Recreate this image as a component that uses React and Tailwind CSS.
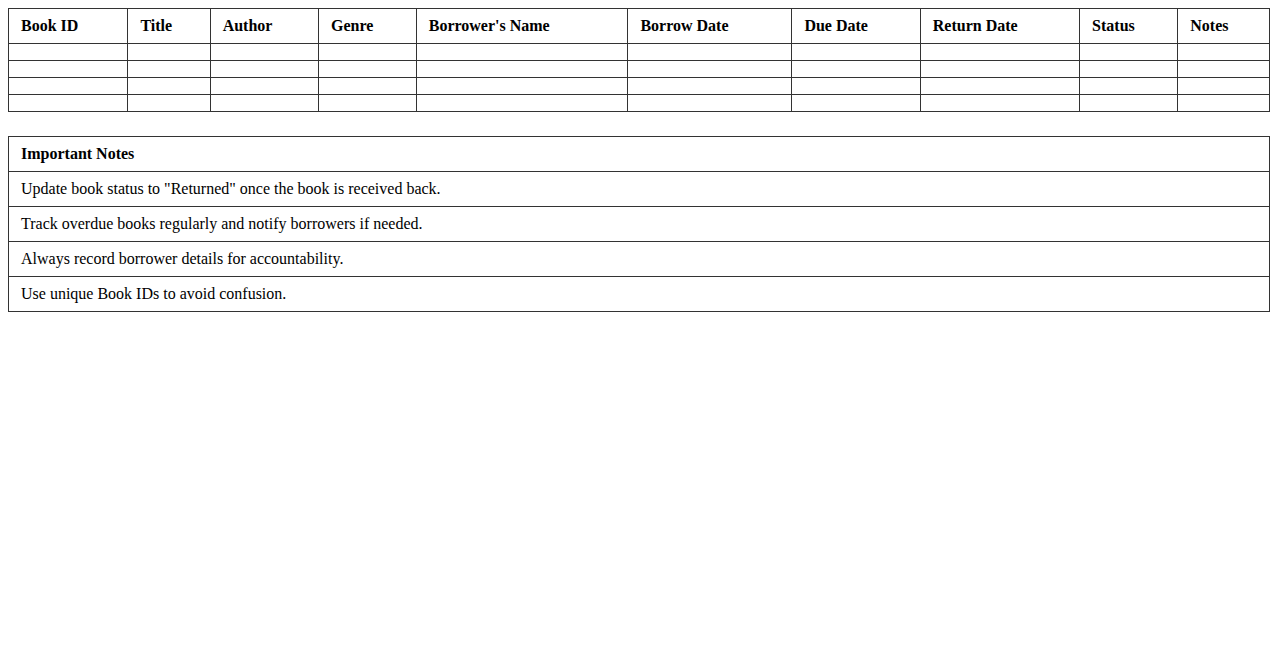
import React from "react";

const headers = ["Book ID", "Title", "Author", "Genre", "Borrower's Name", "Borrow Date", "Due Date", "Return Date", "Status", "Notes"];
const notes = [
  'Update book status to "Returned" once the book is received back.',
  "Track overdue books regularly and notify borrowers if needed.",
  "Always record borrower details for accountability.",
  "Use unique Book IDs to avoid confusion.",
];

export default function App() {
  return (
    <div className="p-2 bg-white text-black text-[16px] leading-[18px]" style={{ fontFamily: '"Liberation Serif", "Times New Roman", serif' }}>
      <table className="w-full border-collapse">
        <thead>
          <tr>
            {headers.map((h) => (
              <th key={h} className="border border-[#333] px-3 py-2 text-left font-bold">{h}</th>
            ))}
          </tr>
        </thead>
        <tbody>
          {[0, 1, 2, 3].map((r) => (
            <tr key={r}>
              {headers.map((h) => (
                <td key={h} className="border border-[#333] px-3 py-2"></td>
              ))}
            </tr>
          ))}
        </tbody>
      </table>
      <table className="w-full border-collapse mt-6">
        <thead>
          <tr>
            <th className="border border-[#333] px-3 py-2 text-left font-bold">Important Notes</th>
          </tr>
        </thead>
        <tbody>
          {notes.map((n) => (
            <tr key={n}>
              <td className="border border-[#333] px-3 py-2">{n}</td>
            </tr>
          ))}
        </tbody>
      </table>
    </div>
  );
}
